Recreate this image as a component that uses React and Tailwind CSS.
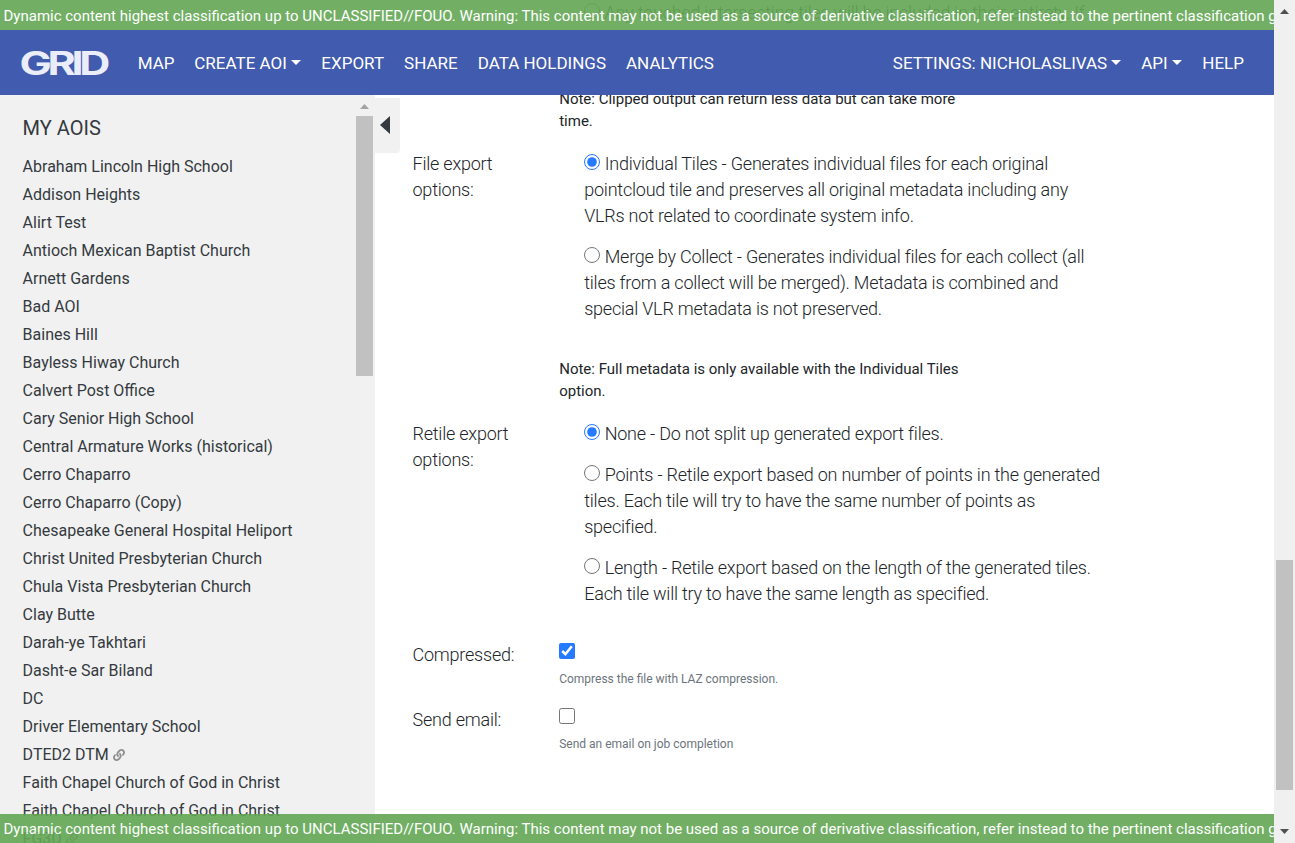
import React from "react";

const aois = [
  "Abraham Lincoln High School", "Addison Heights", "Alirt Test", "Antioch Mexican Baptist Church",
  "Arnett Gardens", "Bad AOI", "Baines Hill", "Bayless Hiway Church", "Calvert Post Office",
  "Cary Senior High School", "Central Armature Works (historical)", "Cerro Chaparro",
  "Cerro Chaparro (Copy)", "Chesapeake General Hospital Heliport", "Christ United Presbyterian Church",
  "Chula Vista Presbyterian Church", "Clay Butte", "Darah-ye Takhtari", "Dasht-e Sar Biland", "DC",
  "Driver Elementary School", "DTED2 DTM", "Faith Chapel Church of God in Christ",
  "Faith Chapel Church of God in Christ", "FG3D",
];
const linked = ["DTED2 DTM", "FG3D"];

function LinkIcon() {
  return (
    <svg className="ml-[4.4px] size-3 shrink-0" viewBox="0 0 512 512" fill="#8f8f8f">
      <path d="M326.612 185.391c59.747 59.809 58.927 155.698.36 214.59-.11.12-.24.25-.36.37l-67.2 67.2c-59.27 59.27-155.699 59.262-214.96 0-59.27-59.26-59.27-155.7 0-214.96l37.106-37.106c9.84-9.84 26.786-3.3 27.294 10.606.648 17.722 3.826 35.527 9.69 52.721 1.986 5.822.567 12.262-3.783 16.612l-13.087 13.087c-28.026 28.026-28.905 73.66-1.155 101.96 28.024 28.579 74.086 28.749 102.325.51l67.2-67.19c28.191-28.191 28.073-73.757 0-101.83-3.701-3.694-7.429-6.564-10.341-8.569a16.037 16.037 0 0 1-6.947-12.606c-.396-10.567 3.348-21.456 11.698-29.806l21.054-21.055c5.521-5.521 14.182-6.199 20.584-1.731a152.482 152.482 0 0 1 20.522 17.197zM467.547 44.449c-59.261-59.262-155.69-59.27-214.96 0l-67.2 67.2c-.12.12-.25.25-.36.37-58.566 58.892-59.387 154.781.36 214.59a152.454 152.454 0 0 0 20.521 17.196c6.402 4.468 15.064 3.789 20.584-1.731l21.054-21.055c8.35-8.35 12.094-19.239 11.698-29.806a16.037 16.037 0 0 0-6.947-12.606c-2.912-2.005-6.64-4.875-10.341-8.569-28.073-28.073-28.191-73.639 0-101.83l67.2-67.19c28.239-28.239 74.3-28.069 102.325.51 27.75 28.3 26.872 73.934-1.155 101.96l-13.087 13.087c-4.35 4.35-5.769 10.79-3.783 16.612 5.864 17.194 9.042 34.999 9.69 52.721.509 13.906 17.454 20.446 27.294 10.606l37.106-37.106c59.271-59.259 59.271-155.699.001-214.959z" />
    </svg>
  );
}

function Banner({ className }) {
  return (
    <div className={`absolute left-0 z-20 w-[1274px] overflow-hidden bg-[#63a755] pl-[3.5px] text-[15px] whitespace-nowrap text-white opacity-90 ${className}`}>
      Dynamic content highest classification up to UNCLASSIFIED//FOUO. Warning: This content may not be used as a source of derivative classification, refer instead to the pertinent classification guide
    </div>
  );
}

function NavItem({ children, caret, className = "" }) {
  return (
    <a className={`flex items-center gap-1 whitespace-nowrap ${className}`}>
      {children}
      {caret && <span className="mt-[-2px] border-x-[5px] border-t-[5px] border-x-transparent border-t-white" />}
    </a>
  );
}

function Option({ name, checked, lines, className = "" }) {
  return (
    <label className={`block whitespace-nowrap ${className}`}>
      <span className="flex h-[26px]">
        <input type="radio" name={name} defaultChecked={checked} className="mt-[3px] mr-[4.5px] size-4 accent-[#267aff]" />
        {lines[0]}
      </span>
      {lines.slice(1).map((l) => <span key={l} className="block">{l}</span>)}
    </label>
  );
}

function Field({ label, children, className }) {
  return (
    <div className={`flex ${className}`}>
      <div className="w-[146px] shrink-0">{label.map((l) => <div key={l} className="whitespace-nowrap">{l}</div>)}</div>
      <div>{children}</div>
    </div>
  );
}

function Note({ lines, className }) {
  return (
    <div className={`ml-[146px] text-[15px] leading-[22px] font-normal tracking-normal whitespace-nowrap ${className}`}>
      {lines.map((l) => <div key={l}>{l}</div>)}
    </div>
  );
}

export default function App() {
  return (
    <div className="relative flex h-[843px] w-[1295px] overflow-hidden bg-white font-[Roboto,sans-serif] text-[#212529]">
      <div className="flex w-[1274px] shrink-0 flex-col">
        <div className="flex h-[30px] shrink-0 items-start overflow-hidden pl-[584px] text-[18px] leading-[26px] font-light tracking-[-0.228px]">
          <Option name="clip" lines={["Any touched intersecting tiles will be included in their entirety. If"]} />
        </div>
        <nav className="z-10 flex h-[65px] shrink-0 items-center bg-[#415bae] pt-[2px] text-[17px] text-white">
          <svg className="mt-[-2px] ml-[19.5px] h-[30px] w-[88px] overflow-visible" viewBox="0 0 88 30">
            <text x="-0.5" y="26.5" textLength="86.5" lengthAdjust="spacingAndGlyphs" className="fill-[#ebeefa] font-[Inter,sans-serif] text-[32px] font-bold tracking-[-3.2px]">GRID</text>
          </svg>
          <NavItem className="ml-[30.2px]">MAP</NavItem>
          <NavItem className="ml-[19.8px]" caret>CREATE AOI</NavItem>
          <NavItem className="ml-[20.5px]">EXPORT</NavItem>
          <NavItem className="ml-5">SHARE</NavItem>
          <NavItem className="ml-5">DATA HOLDINGS</NavItem>
          <NavItem className="ml-5">ANALYTICS</NavItem>
          <NavItem className="ml-auto" caret>SETTINGS: NICHOLASLIVAS</NavItem>
          <NavItem className="ml-5" caret>API</NavItem>
          <NavItem className="mr-[30px] ml-[20.7px]">HELP</NavItem>
        </nav>
        <div className="flex h-[748px] shrink-0 overflow-hidden">
          <aside className="flex w-[375px] shrink-0 justify-between bg-[#f1f1f1] pr-[2px] text-[#343a40]">
            <div className="pt-[19px] pl-[22.6px]">
              <h2 className="text-[20px] leading-7">MY AOIS</h2>
              <ul className="mt-[11px] text-[16px] leading-7">
                {aois.map((a, i) => (
                  <li key={i} className="flex h-7 items-center whitespace-nowrap">{a}{linked.includes(a) && <LinkIcon />}</li>
                ))}
              </ul>
            </div>
            <div className="flex w-[17px] flex-col items-center">
              <svg className="mt-[9px] h-[5px] w-[9px]" viewBox="0 0 9 5"><path d="M0 5 4.5 0 9 5z" fill="#a3a3a3" /></svg>
              <div className="mt-[7px] h-[260px] w-[17px] bg-[#c1c1c1]" />
            </div>
          </aside>
          <div className="mt-[3px] flex h-[55px] w-[25px] shrink-0 items-center rounded-br bg-[#f1f1f1] pb-[1px] pl-[5px]">
            <svg className="h-[18px] w-[10px]" viewBox="0 0 10 18"><path d="M10 0v18L0 9z" fill="#343a40" /></svg>
          </div>
          <main className="ml-[12.5px] text-[18px] leading-[26px] font-light tracking-[-0.222px]">
            <Note className="mt-[-7px] pl-[0.7px]" lines={["Note: Clipped output can return less data but can take more", "time."]} />
            <Field className="mt-[19px]" label={["File export", "options:"]}>
              <div className="ml-[25.7px]">
                <Option name="file" checked lines={["Individual Tiles - Generates individual files for each original", "pointcloud tile and preserves all original metadata including any", "VLRs not related to coordinate system info."]} />
                <Option name="file" className="mt-[15px]" lines={["Merge by Collect - Generates individual files for each collect (all", "tiles from a collect will be merged). Metadata is combined and", "special VLR metadata is not preserved."]} />
              </div>
            </Field>
            <Note className="mt-[36px] pl-[0.7px]" lines={["Note: Full metadata is only available with the Individual Tiles", "option."]} />
            <Field className="mt-[19px]" label={["Retile export", "options:"]}>
              <div className="ml-[25.7px]">
                <Option name="retile" checked lines={["None - Do not split up generated export files."]} />
                <Option name="retile" className="mt-[15px]" lines={["Points - Retile export based on number of points in the generated", "tiles. Each tile will try to have the same number of points as", "specified."]} />
                <Option name="retile" className="mt-[15px]" lines={["Length - Retile export based on the length of the generated tiles.", "Each tile will try to have the same length as specified."]} />
              </div>
            </Field>
            <Field className="mt-[35px] h-[65px]" label={["Compressed:"]}>
              <input type="checkbox" defaultChecked className="mt-[1px] ml-[0.5px] block size-4 accent-[#267aff]" />
              <div className="mt-[11px] pl-[0.7px] text-[12px] leading-[18px] font-normal tracking-normal text-[#6c757d]">Compress the file with LAZ compression.</div>
            </Field>
            <Field label={["Send email:"]}>
              <input type="checkbox" className="mt-[1px] ml-[0.5px] block size-4 accent-[#267aff]" />
              <div className="mt-[11px] pl-[0.7px] text-[12px] leading-[18px] font-normal tracking-normal text-[#6c757d]">Send an email on job completion</div>
            </Field>
          </main>
        </div>
      </div>
      <div className="flex w-[21px] shrink-0 flex-col items-center bg-[#f0f0f0] pt-[9px]">
        <svg className="h-[5px] w-[9px] shrink-0" viewBox="0 0 9 5"><path d="M0 5 4.5 0 9 5z" fill="#505050" /></svg>
        <div className="mt-[546px] h-[230px] w-[17px] shrink-0 bg-[#c1c1c1]" />
        <svg className="mt-[39px] h-[5px] w-[9px] shrink-0" viewBox="0 0 9 5"><path d="M0 0 4.5 5 9 0z" fill="#505050" /></svg>
      </div>
      <Banner className="top-0 h-[30px] leading-[33px]" />
      <Banner className="bottom-0 h-[29px] leading-[31px]" />
    </div>
  );
}
